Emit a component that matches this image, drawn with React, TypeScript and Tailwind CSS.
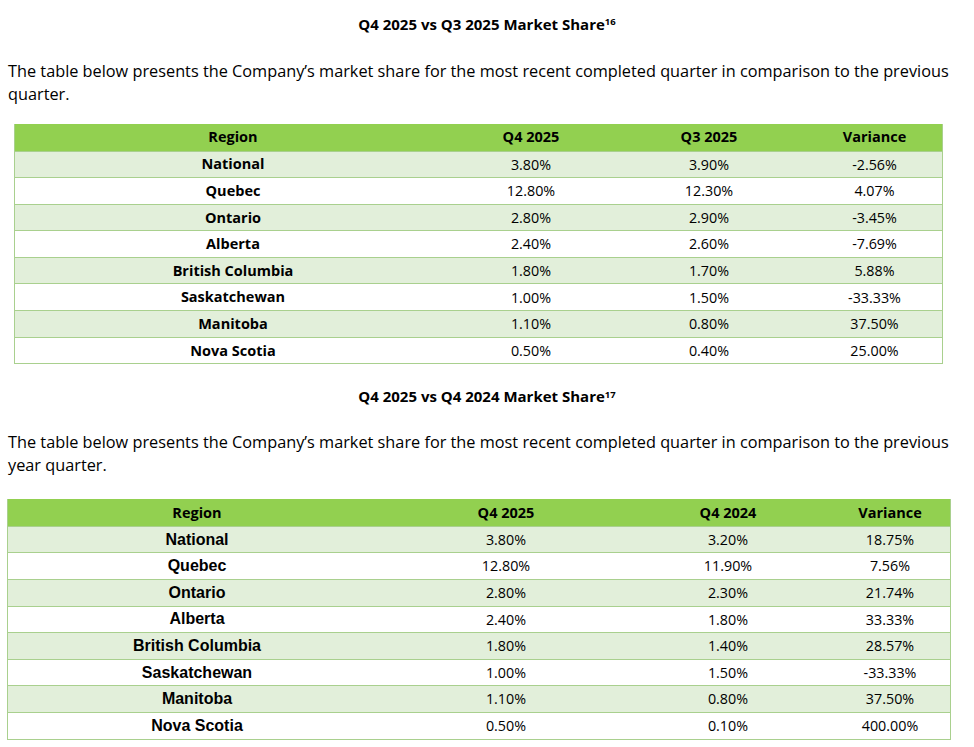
type Row = { region: string; a: string; b: string; v: string }

const q3Rows: Row[] = [
  { region: 'National', a: '3.80%', b: '3.90%', v: '-2.56%' },
  { region: 'Quebec', a: '12.80%', b: '12.30%', v: '4.07%' },
  { region: 'Ontario', a: '2.80%', b: '2.90%', v: '-3.45%' },
  { region: 'Alberta', a: '2.40%', b: '2.60%', v: '-7.69%' },
  { region: 'British Columbia', a: '1.80%', b: '1.70%', v: '5.88%' },
  { region: 'Saskatchewan', a: '1.00%', b: '1.50%', v: '-33.33%' },
  { region: 'Manitoba', a: '1.10%', b: '0.80%', v: '37.50%' },
  { region: 'Nova Scotia', a: '0.50%', b: '0.40%', v: '25.00%' },
]

const yoyRows: Row[] = [
  { region: 'National', a: '3.80%', b: '3.20%', v: '18.75%' },
  { region: 'Quebec', a: '12.80%', b: '11.90%', v: '7.56%' },
  { region: 'Ontario', a: '2.80%', b: '2.30%', v: '21.74%' },
  { region: 'Alberta', a: '2.40%', b: '1.80%', v: '33.33%' },
  { region: 'British Columbia', a: '1.80%', b: '1.40%', v: '28.57%' },
  { region: 'Saskatchewan', a: '1.00%', b: '1.50%', v: '-33.33%' },
  { region: 'Manitoba', a: '1.10%', b: '0.80%', v: '37.50%' },
  { region: 'Nova Scotia', a: '0.50%', b: '0.10%', v: '400.00%' },
]

interface ShareTableProps {
  rows: Row[]
  prevLabel: string
  cols: string
  arialRegions?: boolean
}

function ShareTable({ rows, prevLabel, cols, arialRegions }: ShareTableProps) {
  return (
    <div className="border-x border-b border-[#a9d08e]">
      {/* Header */}
      <div className={`grid ${cols} h-[26.5px] items-center bg-[#92d050] text-[14.5px] font-bold text-black`}>
        <div className="text-center">Region</div>
        <div className="text-center">Q4 2025</div>
        <div className="text-center">{prevLabel}</div>
        <div className="text-center">Variance</div>
      </div>
      {rows.map((r, i) => (
        <div
          key={r.region}
          className={`grid ${cols} h-[26.6px] items-center border-t border-[#a9d08e] text-[14.3px] text-black ${
            i % 2 === 0 ? 'bg-[#e2efda]' : 'bg-white'
          }`}
        >
          <div
            className={
              arialRegions
                ? "text-center font-['Liberation_Sans',Arial,sans-serif] text-[16px] font-bold"
                : 'text-center text-[14.5px] font-bold'
            }
          >
            {r.region}
          </div>
          <div className="text-center">{r.a}</div>
          <div className="text-center">{r.b}</div>
          <div className="text-center">{r.v}</div>
        </div>
      ))}
    </div>
  )
}

export default function App() {
  return (
    <div className="min-h-[747px] w-[974px] bg-white font-['Open_Sans','Noto_Sans',sans-serif] text-black">
      {/* Q4 vs Q3 */}
      <h2 className="pt-[14px] text-center text-[15px] font-bold leading-[20px]">
        Q4 2025 vs Q3 2025 Market Share<sup className="text-[9.5px]">16</sup>
      </h2>
      <p className="mt-[26px] whitespace-nowrap pl-[8px] text-[16.3px] leading-[23px]">
        The table below presents the Company’s market share for the most recent completed quarter in comparison to the previous
        <br />
        quarter.
      </p>
      <div className="ml-[14px] mt-[18px] w-[929px]">
        <ShareTable rows={q3Rows} prevLabel="Q3 2025" cols="grid-cols-[436px_160px_196px_1fr]" />
      </div>

      {/* Q4 vs Q4 prior year */}
      <h2 className="mt-[22px] text-center text-[15px] font-bold leading-[20px]">
        Q4 2025 vs Q4 2024 Market Share<sup className="text-[9.5px]">17</sup>
      </h2>
      <p className="mt-[25px] whitespace-nowrap pl-[8px] text-[16.3px] leading-[23px]">
        The table below presents the Company’s market share for the most recent completed quarter in comparison to the previous
        <br />
        year quarter.
      </p>
      <div className="ml-[7px] mt-[22px] w-[944px]">
        <ShareTable rows={yoyRows} prevLabel="Q4 2024" cols="grid-cols-[378px_240px_204px_1fr]" arialRegions />
      </div>
    </div>
  )
}
